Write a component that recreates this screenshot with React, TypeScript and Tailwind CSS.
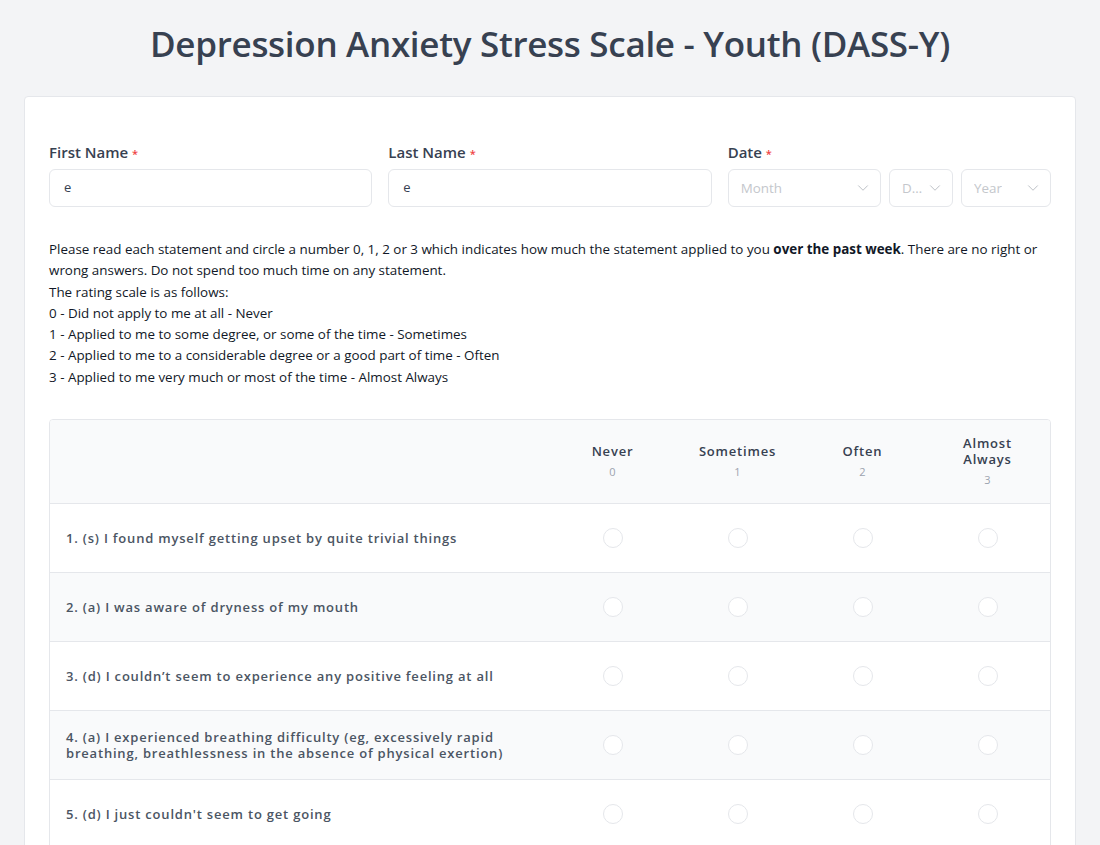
import { ChevronDown } from "lucide-react";

const questions = [
  "1. (s) I found myself getting upset by quite trivial things",
  "2. (a) I was aware of dryness of my mouth",
  "3. (d) I couldn’t seem to experience any positive feeling at all",
  "4. (a) I experienced breathing difficulty (eg, excessively rapid breathing, breathlessness in the absence of physical exertion)",
  "5. (d) I just couldn't seem to get going",
  "6. (s) I tended to over-react to situations",
];

const scale = [
  { label: "Never", value: 0 },
  { label: "Sometimes", value: 1 },
  { label: "Often", value: 2 },
  { label: "Almost Always", value: 3 },
];

function Label({ children }: { children: React.ReactNode }) {
  return (
    <label className="mb-[5px] block text-[15px] font-semibold leading-[20px] text-[#374151]">
      {children} <span className="text-[11px] text-[#ef4444]">*</span>
    </label>
  );
}

function Select({ placeholder, className }: { placeholder: string; className: string }) {
  return (
    <div
      className={`flex h-[38px] items-center justify-between gap-1 rounded-md border border-[#e5e7eb] bg-white pl-3 pr-2 text-[13.4px] text-[#c4c7cc] ${className}`}
    >
      <span className="min-w-0 truncate">{placeholder}</span>
      <ChevronDown className="size-[18px] shrink-0 text-[#b8bcc2]" strokeWidth={1.25} />
    </div>
  );
}

export default function App() {
  return (
    <div
      className="min-h-screen bg-[#f3f4f6] pb-10"
      style={{ fontFamily: '"Open Sans", "Noto Sans", sans-serif' }}
    >
      <h1 className="pt-[19px] pb-[27px] text-center text-[35px] font-semibold leading-[50px] tracking-[-0.3px] text-[#374151]">
        Depression Anxiety Stress Scale - Youth (DASS-Y)
      </h1>

      <div className="mx-6 rounded border border-[#e5e7eb] bg-white px-6 pt-[45px] pb-8">
        <div className="grid grid-cols-3 gap-4">
          <div>
            <Label>First Name</Label>
            <div className="flex h-[38px] items-center rounded-md border border-[#e5e7eb] bg-white px-3.5 text-[13px] text-[#374151]">
              e
            </div>
          </div>
          <div>
            <Label>Last Name</Label>
            <div className="flex h-[38px] items-center rounded-md border border-[#e5e7eb] bg-white px-3.5 text-[13px] text-[#374151]">
              e
            </div>
          </div>
          <div>
            <Label>Date</Label>
            <div className="flex gap-2">
              <Select placeholder="Month" className="flex-1" />
              <Select placeholder="Day" className="w-[64px]" />
              <Select placeholder="Year" className="w-[90px]" />
            </div>
          </div>
        </div>

        <div className="mt-[32px] text-[13.4px] leading-[21.3px] text-[#111827]">
          <p>
            Please read each statement and circle a number 0, 1, 2 or 3 which indicates how much the
            statement applied to you <b>over the past week</b>. There are no right or wrong answers. Do
            not spend too much time on any statement.
          </p>
          <p>The rating scale is as follows:</p>
          <p>0 - Did not apply to me at all - Never</p>
          <p>1 - Applied to me to some degree, or some of the time - Sometimes</p>
          <p>2 - Applied to me to a considerable degree or a good part of time - Often</p>
          <p>3 - Applied to me very much or most of the time - Almost Always</p>
        </div>

        <div className="mt-[31px] overflow-hidden rounded border border-[#e5e7eb]">
          <div className="grid h-[84px] grid-cols-[1fr_125px_125px_125px_125px] items-center border-b border-[#e5e7eb] bg-[#f9fafb]">
            <div />
            {scale.map((s) => (
              <div key={s.value} className="flex flex-col items-center px-6 pb-[2px] text-center">
                <span className="text-[13px] font-semibold leading-[16px] tracking-[0.8px] text-[#374151]">
                  {s.label}
                </span>
                <span className="mt-[6px] text-[11px] leading-[14px] text-[#9ca3af]">{s.value}</span>
              </div>
            ))}
          </div>
          {questions.map((q, i) => (
            <div
              key={q}
              className={`grid h-[69px] grid-cols-[1fr_125px_125px_125px_125px] items-center border-b border-[#e5e7eb] last:border-b-0 ${
                i % 2 === 1 ? "bg-[#f9fafb]" : "bg-white"
              }`}
            >
              <div className="pl-4 pr-6 text-[13px] font-semibold leading-[16px] tracking-[0.8px] text-[#4b5563]">
                {q}
              </div>
              {scale.map((s) => (
                <div key={s.value} className="flex justify-center">
                  <span className="block size-5 rounded-full border border-[#e5e7eb] bg-white" />
                </div>
              ))}
            </div>
          ))}
        </div>
      </div>
    </div>
  );
}
